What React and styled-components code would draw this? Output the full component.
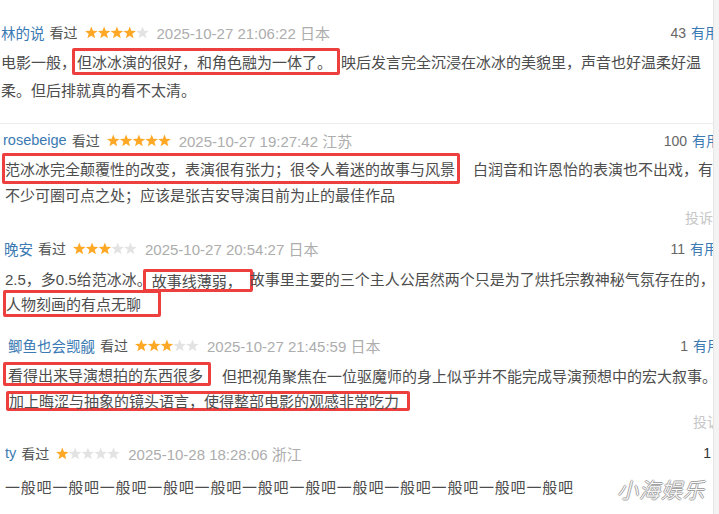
import styled, { createGlobalStyle } from "styled-components";

const GlobalStyle = createGlobalStyle`
  html, body {
    margin: 0;
    padding: 0;
    background: #fff;
  }
  body {
    font-family: "Liberation Sans", "Noto Sans CJK SC", sans-serif;
  }
`;

const Page = styled.div`
  position: relative;
  width: 719px;
  height: 514px;
  display: flex;
  overflow: hidden;
  background: #fff;
`;

const Feed = styled.div`
  width: 713px;
  flex-shrink: 0;
  overflow: hidden;
`;

const Stripe = styled.div`
  flex: 1;
  background: #f3f3f3;
  border-left: 1px solid #e6e6e6;
`;

const Review = styled.section`
  padding-top: ${(p) => p.$top}px;
  padding-bottom: ${(p) => p.$bottom || 0}px;
  border-bottom: ${(p) => (p.$divider ? "1px solid #ececec" : "none")};
`;

const Head = styled.div`
  display: flex;
  align-items: center;
  height: 20px;
  padding-left: ${(p) => p.$indent}px;
  font-size: 14px;
  white-space: nowrap;
`;

const Name = styled.span`
  color: #3b7ab3;
  font-size: 14.5px;
`;

const Watched = styled.span`
  color: #555;
  margin: 0 7px 0 5px;
`;

const Time = styled.span`
  color: #adadad;
  font-size: 15px;
  margin-left: 8px;
`;

const Votes = styled.span`
  display: flex;
  align-items: baseline;
  gap: 5px;
  margin-left: auto;
  margin-right: ${(p) => p.$mr}px;
  color: ${(p) => (p.$dark ? "#333" : "#666")};
`;

const Useful = styled.span`
  color: #3b7ab3;
`;

const Body = styled.div`
  margin-top: ${(p) => p.$gap}px;
  font-size: 15px;
  color: #4d4d4d;
`;

const Line = styled.div`
  display: flex;
  align-items: center;
  height: ${(p) => p.$lh}px;
  padding-left: ${(p) => p.$indent}px;
  white-space: nowrap;
  letter-spacing: ${(p) => p.$ls || 0}px;
`;

const Mark = styled.span`
  box-sizing: border-box;
  display: flex;
  align-items: center;
  flex-shrink: 0;
  height: ${(p) => p.$h}px;
  border: 3px solid #ee3f3f;
  border-radius: 2px;
  padding: 0 ${(p) => p.$pr || 0}px 0 ${(p) => p.$pl || 0}px;
  margin: ${(p) => p.$dy || 0}px ${(p) => p.$mr || 0}px 0 ${(p) => p.$ml || 0}px;
`;

const Report = styled.div`
  display: flex;
  justify-content: flex-end;
  align-items: center;
  height: 20px;
  margin-top: ${(p) => p.$mt || 0}px;
  margin-right: ${(p) => p.$mr || 0}px;
  font-size: 14px;
  color: #c6c6c6;
`;

const Watermark = styled.div`
  position: absolute;
  left: 617px;
  top: 474px;
  font-family: "Noto Sans CJK SC", sans-serif;
  font-size: 21px;
  font-weight: 300;
  font-style: italic;
  letter-spacing: 1px;
  color: #fefefe;
  text-shadow: 1px 0 0 #a2a2a2, -1px 0 0 #a2a2a2, 0 1px 0 #a2a2a2, 0 -1px 0 #a2a2a2;
`;

const starPoints = (cx, cy, R, r) => {
  const pts = [];
  for (let i = 0; i < 10; i++) {
    const a = ((-90 + i * 36) * Math.PI) / 180;
    const rad = i % 2 === 0 ? R : r;
    pts.push(`${(cx + rad * Math.cos(a)).toFixed(2)},${(cy + rad * Math.sin(a)).toFixed(2)}`);
  }
  return pts.join(" ");
};

const Stars = ({ value }) => (
  <svg width="64" height="13" viewBox="0 0 64 13">
    {[0, 1, 2, 3, 4].map((i) => (
      <polygon
        key={i}
        points={starPoints(6.3 + i * 12.8, 7, 6.6, 2.8)}
        fill={i < value ? "#ffa826" : "#e3e3e3"}
      />
    ))}
  </svg>
);

const Header = ({ indent, name, stars, time, count, mr, useful = true, dark }) => (
  <Head $indent={indent}>
    <Name>{name}</Name>
    <Watched>看过</Watched>
    <Stars value={stars} />
    <Time>{time}</Time>
    <Votes $mr={mr} $dark={dark}>
      <span>{count}</span>
      {useful && <Useful>有用</Useful>}
    </Votes>
  </Head>
);

export default function App() {
  return (
    <>
      <GlobalStyle />
      <Page>
        <Feed>
          <Review $top={22} $bottom={20} $divider>
            <Header indent={1} name="林的说" stars={4} time="2025-10-27 21:06:22 日本" count="43" mr={-6} />
            <Body $gap={5}>
              <Line $lh={28} $indent={1}>
                电影一般，
                <Mark $h={27} $ml={-4} $pl={2} $pr={5} $mr={1}>
                  但冰冰演的很好，和角色融为一体了。
                </Mark>
                映后发言完全沉浸在冰冰的美貌里，声音也好温柔好温
              </Line>
              <Line $lh={28} $indent={1}>
                柔。但后排就真的看不太清。
              </Line>
            </Body>
          </Review>

          <Review $top={6}>
            <Header indent={3} name="rosebeige" stars={5} time="2025-10-27 19:27:42 江苏" count="100" mr={-7} />
            <Body $gap={5}>
              <Line $lh={26} $indent={2}>
                <Mark $h={31} $pl={0} $pr={2} $mr={13}>
                  范冰冰完全颠覆性的改变，表演很有张力；很令人着迷的故事与风景
                </Mark>
                白润音和许恩怡的表演也不出戏，有
              </Line>
              <Line $lh={26} $indent={5}>
                不少可圈可点之处；应该是张吉安导演目前为止的最佳作品
              </Line>
            </Body>
            <Report>投诉</Report>
          </Review>

          <Review $top={11}>
            <Header indent={4} name="晚安" stars={3} time="2025-10-27 20:54:27 日本" count="11" mr={-5} />
            <Body $gap={8}>
              <Line $lh={25} $indent={5}>
                2.5，多0.5给范冰冰。
                <Mark $h={23} $dy={4} $ml={-9} $pl={6} $pr={8} $mr={-3}>
                  故事线薄弱，
                </Mark>
                故事里主要的三个主人公居然两个只是为了烘托宗教神秘气氛存在的，
              </Line>
              <Line $lh={25} $indent={3}>
                <Mark $h={27} $pl={0} $pr={17}>
                  人物刻画的有点无聊
                </Mark>
              </Line>
            </Body>
          </Review>

          <Review $top={19}>
            <Header indent={8} name="鲫鱼也会觊觎" stars={3} time="2025-10-27 21:45:59 日本" count="1" mr={-8} />
            <Body $gap={8}>
              <Line $lh={25} $indent={3}>
                <Mark $h={24} $dy={-3} $pl={2} $pr={5} $mr={11}>
                  看得出来导演想拍的东西很多
                </Mark>
                但把视角聚焦在一位驱魔师的身上似乎并不能完成导演预想中的宏大叙事。
              </Line>
              <Line $lh={25} $indent={6}>
                <Mark $h={20} $pl={0} $pr={8}>
                  加上晦涩与抽象的镜头语言，使得整部电影的观感非常吃力
                </Mark>
              </Line>
            </Body>
            <Report $mt={-2} $mr={-8}>投诉</Report>
          </Review>

          <Review $top={12}>
            <Header indent={5} name="ty" stars={1} time="2025-10-28 18:28:06 浙江" count="1" mr={2} useful={false} dark />
            <Body $gap={10}>
              <Line $lh={26} $indent={5} $ls={0.8}>
                一般吧一般吧一般吧一般吧一般吧一般吧一般吧一般吧一般吧一般吧一般吧一般吧
              </Line>
            </Body>
          </Review>
        </Feed>
        <Stripe />
        <Watermark>小海娱乐</Watermark>
      </Page>
    </>
  );
}
